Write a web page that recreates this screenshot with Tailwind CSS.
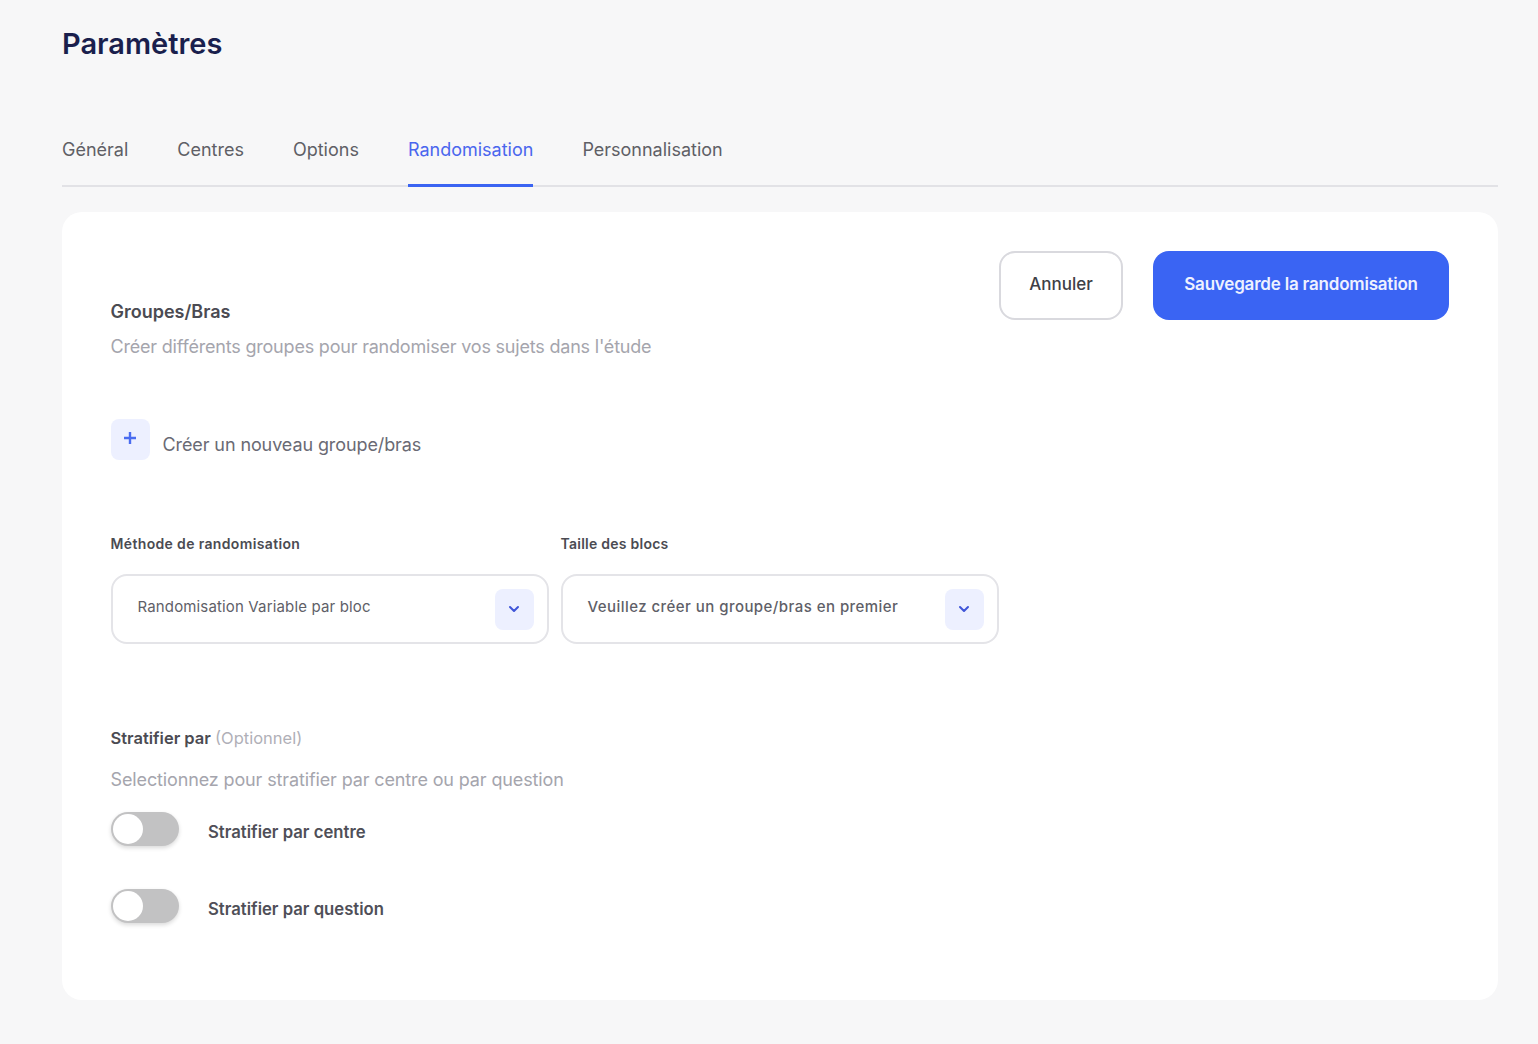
<!DOCTYPE html>
<html lang="fr">
<head>
  <meta charset="UTF-8" />
  <title>Paramètres</title>
  <script src="https://cdn.jsdelivr.net/npm/@tailwindcss/browser@4"></script>
</head>
<body class="bg-[#f7f7f8] min-h-screen font-['Inter',sans-serif] text-[#4b4b55]">
  <div class="pl-[62px] pr-[40px] pt-[25px] pb-[40px]">
    <h1 class="text-[29px] leading-[38px] font-semibold text-[#1a1f4d]">Paramètres</h1>

    <div class="mt-[75px] flex gap-[49px] border-b-2 border-[#e2e2e6] text-[18px] leading-[24px] text-[#5f5f66]">
      <a class="pb-[22px]">Général</a>
      <a class="pb-[22px]">Centres</a>
      <a class="pb-[22px]">Options</a>
      <a class="pb-[22px] -mb-[2px] border-b-[3px] border-[#3b64f2] text-[#4a66ee]">Randomisation</a>
      <a class="pb-[22px]">Personnalisation</a>
    </div>

    <div class="mt-[25px] h-[788px] bg-white rounded-[20px] pl-[48.5px] pr-[49px] pt-[39px] relative">
      <div class="flex justify-end gap-[30px]">
        <button class="w-[124px] h-[69px] rounded-[16px] border-2 border-[#d9d9de] bg-white text-[17px] font-medium text-[#3f3f46] pb-[2px]">Annuler</button>
        <button class="w-[296px] h-[69px] rounded-[16px] bg-[#3a64f3] text-[17px] tracking-[-0.2px] font-semibold text-[#eef1ff] pb-[2px]">Sauvegarde la randomisation</button>
      </div>

      <div class="-mt-[20px]">
        <h2 class="text-[18px] leading-[24px] font-semibold text-[#4b4b52]">Groupes/Bras</h2>
        <p class="mt-[11px] text-[18px] leading-[24px] tracking-[-0.2px] text-[#a5a5ad]">Créer différents groupes pour randomiser vos sujets dans l'étude</p>
      </div>

      <div class="mt-[60px] flex items-center gap-[12.5px]">
        <span class="w-[39.5px] h-[41px] rounded-[8px] bg-[#edf0ff] flex items-center justify-center pb-[3px]">
          <svg width="14" height="14" viewBox="0 0 14 14" fill="none" stroke="#4a6cf0" stroke-width="2.4"><path d="M7 1v12M1 7h12"/></svg>
        </span>
        <span class="text-[18px] leading-[24px] tracking-[-0.1px] text-[#6a6a74] mt-[10px]">Créer un nouveau groupe/bras</span>
      </div>

      <div class="mt-[74px] flex gap-[11.5px]">
        <div class="w-[438.5px]">
          <label class="block text-[14px] leading-[20px] tracking-[0.35px] font-semibold text-[#4b4b52]">Méthode de randomisation</label>
          <div class="mt-[20px] h-[70px] rounded-[16px] border-2 border-[#e4e4e8] flex items-center justify-between pl-[25px] pr-[13.5px]">
            <span class="text-[15px] leading-[20px] tracking-[0.15px] text-[#5f5f68] -mt-[4px]">Randomisation Variable par bloc</span>
            <span class="w-[39px] h-[41px] rounded-[8px] bg-[#edf0ff] flex items-center justify-center">
              <svg width="12" height="8" viewBox="0 0 12 8" fill="none" stroke="#3f55d8" stroke-width="2" stroke-linecap="round" stroke-linejoin="round"><path d="M2 2l4 4 4-4"/></svg>
            </span>
          </div>
        </div>
        <div class="w-[438.5px]">
          <label class="block text-[14px] leading-[20px] tracking-[0.25px] font-semibold text-[#4b4b52]">Taille des blocs</label>
          <div class="mt-[20px] h-[70px] rounded-[16px] border-2 border-[#e4e4e8] flex items-center justify-between pl-[25px] pr-[13.5px]">
            <span class="text-[15px] leading-[20px] tracking-[0.45px] font-medium text-[#5f5f68] -mt-[4px]">Veuillez créer un groupe/bras en premier</span>
            <span class="w-[39px] h-[41px] rounded-[8px] bg-[#edf0ff] flex items-center justify-center">
              <svg width="12" height="8" viewBox="0 0 12 8" fill="none" stroke="#3f55d8" stroke-width="2" stroke-linecap="round" stroke-linejoin="round"><path d="M2 2l4 4 4-4"/></svg>
            </span>
          </div>
        </div>
      </div>

      <div class="mt-[82px]">
        <p class="text-[16.5px] leading-[24px] font-semibold text-[#4b4b52]">Stratifier par <span class="font-normal text-[#b0b0b7]">(Optionnel)</span></p>
        <p class="mt-[18px] text-[18px] leading-[24px] tracking-[-0.13px] text-[#a5a5ad]">Selectionnez pour stratifier par centre ou par question</p>
      </div>

      <div class="mt-[20px] flex items-center gap-[29px]">
        <span class="relative w-[68.5px] h-[34px] rounded-full bg-[#c2c2c3] shadow-[0_2px_4px_rgba(0,0,0,0.15)]">
          <span class="absolute left-[2px] top-[2px] w-[30px] h-[30px] rounded-full bg-white"></span>
        </span>
        <span class="text-[16.7px] leading-[24px] font-semibold text-[#4f4f58] mt-[6px]">Stratifier par centre</span>
      </div>
      <div class="mt-[43px] flex items-center gap-[29px]">
        <span class="relative w-[68.5px] h-[34px] rounded-full bg-[#c2c2c3] shadow-[0_2px_4px_rgba(0,0,0,0.15)]">
          <span class="absolute left-[2px] top-[2px] w-[30px] h-[30px] rounded-full bg-white"></span>
        </span>
        <span class="text-[16.7px] leading-[24px] font-semibold text-[#4f4f58] mt-[6px]">Stratifier par question</span>
      </div>
    </div>
  </div>
</body>
</html>
